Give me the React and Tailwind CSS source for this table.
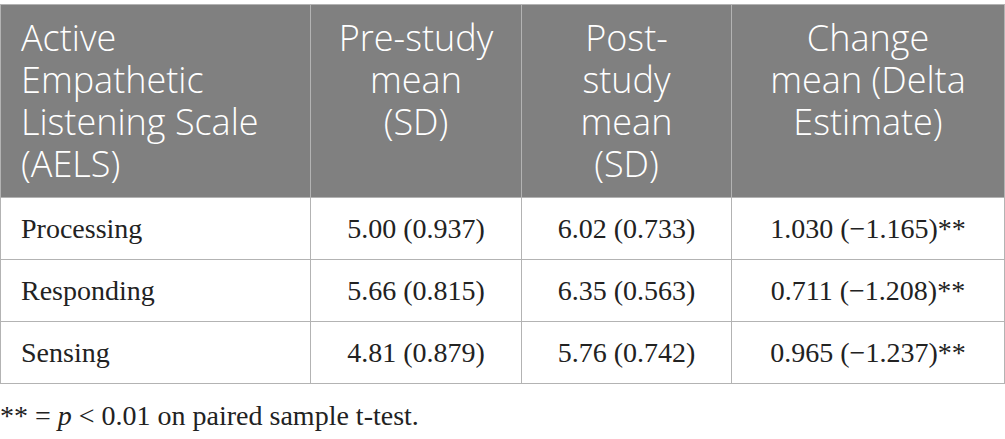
const rows = [
  ['Processing', '5.00 (0.937)', '6.02 (0.733)', '1.030 (−1.165)**'],
  ['Responding', '5.66 (0.815)', '6.35 (0.563)', '0.711 (−1.208)**'],
  ['Sensing', '4.81 (0.879)', '5.76 (0.742)', '0.965 (−1.237)**'],
];

const headers = [
  { lines: ['Active', 'Empathetic', 'Listening Scale', '(AELS)'], align: 'text-left' },
  { lines: ['Pre-study', 'mean', '(SD)'], align: 'text-center' },
  { lines: ['Post-', 'study', 'mean', '(SD)'], align: 'text-center' },
  { lines: ['Change', 'mean (Delta', 'Estimate)'], align: 'text-center' },
];

export default function App() {
  return (
    <div className="w-[1005px] h-[439px] bg-white pt-[4px]">
      <table className="w-[1004px] border-collapse table-fixed">
        <colgroup>
          <col className="w-[310px]" />
          <col className="w-[211px]" />
          <col className="w-[210px]" />
          <col className="w-[273px]" />
        </colgroup>
        <thead>
          <tr className="bg-[#808080]">
            {headers.map((h, i) => (
              <th
                key={i}
                className={`${h.align} align-top border border-[#b3b3b3] h-[193px] px-[20px] pt-[12px] font-['Open_Sans',sans-serif] font-light text-[36px] leading-[42px] text-white whitespace-nowrap`}
              >
                {h.lines.map((l, j) => (
                  <div key={j}>{l}</div>
                ))}
              </th>
            ))}
          </tr>
        </thead>
        <tbody className="font-['Liberation_Serif',serif] text-[28px] text-[#222]">
          {rows.map((r, i) => (
            <tr key={i} className="h-[62px]">
              <td className="border border-[#b3b3b3] px-[20px] text-left">{r[0]}</td>
              <td className="border border-[#b3b3b3] px-[10px] text-center">{r[1]}</td>
              <td className="border border-[#b3b3b3] px-[10px] text-center">{r[2]}</td>
              <td className="border border-[#b3b3b3] px-[10px] text-center">{r[3]}</td>
            </tr>
          ))}
        </tbody>
      </table>
      <p className="mt-[16px] font-['Liberation_Serif',serif] text-[28px] text-[#222] leading-[32px]">
        ** = <i>p</i> &lt; 0.01 on paired sample t-test.
      </p>
    </div>
  );
}
